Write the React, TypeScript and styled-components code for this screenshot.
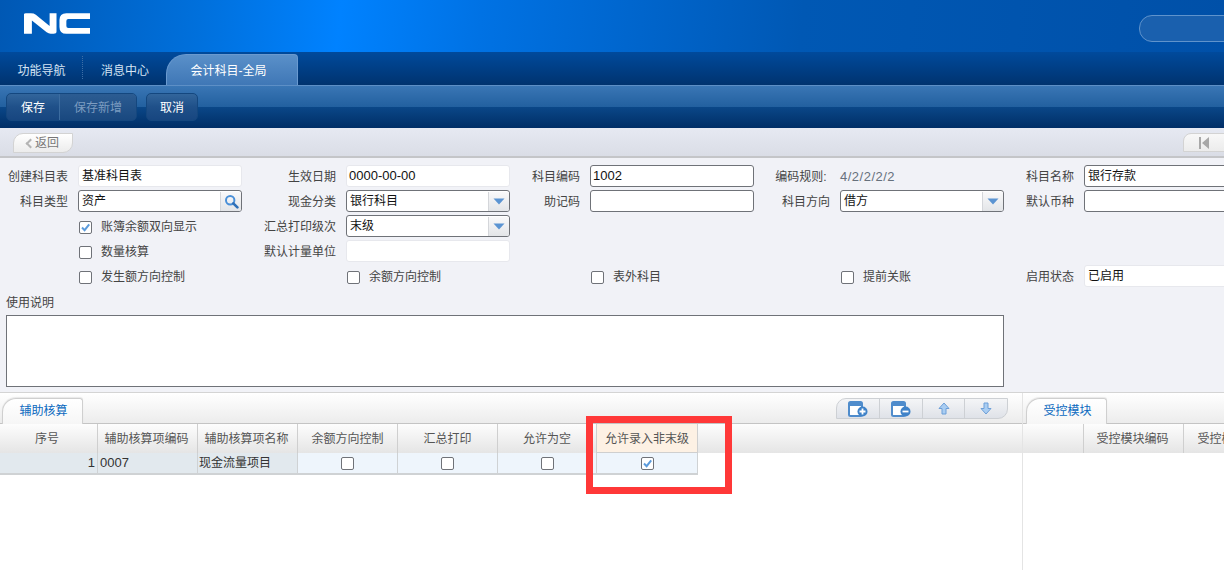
import React from "react";
import styled, { createGlobalStyle } from "styled-components";

const Global = createGlobalStyle`
  html, body { margin: 0; padding: 0; height: 100%; overflow: hidden; background: #fff; }
  body { font: 12px/1.2 "Liberation Sans", "Noto Sans CJK SC", sans-serif; color: #333; }
  #root { height: 100%; }
`;

const Page = styled.div`
  position: relative;
  width: 1224px;
  height: 570px;
  overflow: hidden;
`;

const Banner = styled.header`
  height: 52px;
  display: flex;
  align-items: flex-start;
  justify-content: space-between;
  background: linear-gradient(96deg, #0058b4 0, #0070dc 200px, #0082ff 340px, #0072e4 480px, #0058b4 800px, #0050a8 1224px);
`;

const Logo = styled.svg`
  margin: 13px 0 0 24px;
  width: 66px;
  height: 21px;
`;

const Search = styled.div`
  margin: 15px -42px 0 0;
  width: 125px;
  height: 25px;
  border: 1px solid #5f93cc;
  border-radius: 13px;
  background: #1a60ae;
`;

const TabBar = styled.nav`
  height: 34px;
  display: flex;
  align-items: flex-end;
  background: linear-gradient(#004a9c, #00336f);
  border-bottom: 1px solid #5d8fc6;
  box-sizing: border-box;
`;

const NavTab = styled.div<{ $sep?: boolean }>`
  height: 23px;
  margin-bottom: 6px;
  padding: 7px 0 0 1px;
  width: 83px;
  display: flex;
  align-items: center;
  justify-content: center;
  color: #d6e4f4;
  box-sizing: border-box;
  border-right: ${(p) => (p.$sep ? "1px dotted #3d6ea6" : "none")};
`;

const ActiveTab = styled.div`
  width: 132px;
  height: 31px;
  padding: 2px 7px 0 0;
  box-sizing: border-box;
  display: flex;
  align-items: center;
  justify-content: center;
  color: #fff;
  border: 1px solid #6a9ad0;
  border-bottom: none;
  border-radius: 20px 4px 0 0;
  background: linear-gradient(#5a90c9, #3f77b6);
`;

const Toolbar = styled.div`
  height: 42px;
  box-sizing: border-box;
  padding: 7px 6px;
  display: flex;
  gap: 9px;
  background: linear-gradient(#3a76b5 0, #22609f 50%, #0a4788 50%, #002e66 100%);
`;

const ButtonGroup = styled.div`
  display: flex;
  height: 28px;
  border: 1px solid #14477f;
  border-radius: 5px;
  overflow: hidden;
  box-sizing: border-box;
  background: linear-gradient(#32659b, #1f5089 50%, #174680);
`;

const ToolButton = styled.div<{ $w: number; $off?: boolean; $div?: boolean }>`
  width: ${(p) => p.$w}px;
  padding-top: 2px;
  display: flex;
  align-items: center;
  justify-content: center;
  color: ${(p) => (p.$off ? "#7c9cc0" : "#fff")};
  border-right: ${(p) => (p.$div ? "1px solid #3c6ca0" : "none")};
  background: ${(p) => (p.$off ? "linear-gradient(#2c5c92, #19487f)" : "none")};
  box-sizing: border-box;
`;

const BackBar = styled.div`
  height: 30px;
  box-sizing: border-box;
  padding-top: 5px;
  display: flex;
  justify-content: space-between;
  padding-left: 13px;
  background: linear-gradient(#e6e9f2, #dadde6);
  border-bottom: 2px solid #c4c5c8;
`;

const BackButton = styled.div`
  width: 60px;
  height: 20px;
  box-sizing: border-box;
  display: flex;
  align-items: center;
  padding-left: 14px;
  color: #777;
  border: 1px solid #d3d3d3;
  border-radius: 10px 0 10px 0;
  background: linear-gradient(#fff, #ececec);
`;

const ChevronLeft = styled.span`
  width: 5px;
  height: 5px;
  margin-right: 1px;
  margin-left: -1px;
  border-left: 2px solid #b4b4b4;
  border-bottom: 2px solid #b4b4b4;
  transform: rotate(45deg);
`;

const PagerButton = styled.div`
  margin-right: -19px;
  width: 60px;
  height: 19px;
  box-sizing: border-box;
  padding-left: 15px;
  display: flex;
  align-items: center;
  border: 1px solid #d3d3d3;
  border-radius: 8px 0 0 0;
  background: linear-gradient(#f8f8f8, #ececec);
`;

const Form = styled.section`
  height: 235px;
  box-sizing: border-box;
  background: #f1f2f7;
  padding: 7px 0 0 6px;
  border-bottom: 1px solid #d4d4d4;
  overflow: hidden;
`;

const FieldGrid = styled.div`
  display: grid;
  grid-template-columns: 72px 164px 104px 164px 80px 164px 86px 164px 80px 164px;
  grid-auto-rows: 22px;
  row-gap: 3px;
  width: 1300px;
`;

const Label = styled.label<{ $col?: number }>`
  ${(p) => (p.$col ? `grid-column: ${p.$col};` : "")}
  display: flex;
  align-items: center;
  justify-content: flex-end;
  padding: 2px 10px 0 0;
  white-space: nowrap;
  color: #444;
`;

const Field = styled.div<{ $soft?: boolean; $num?: boolean }>`
  box-sizing: border-box;
  height: 22px;
  display: flex;
  align-items: center;
  justify-content: space-between;
  padding: ${(p) => (p.$num ? "0 0 0 2px" : "1px 0 0 3px")};
  font-size: ${(p) => (p.$num ? "13px" : "12px")};
  background: #fff;
  color: #111;
  border: 1px solid ${(p) => (p.$soft ? "#e7e8ed" : "#6f7278")};
  border-radius: 3px;
  overflow: hidden;
`;

const FieldAction = styled.span`
  width: 20px;
  height: 100%;
  margin-top: -1px;
  flex: none;
  display: flex;
  align-items: center;
  justify-content: center;
  border-left: 1px solid #d4d6da;
  background: linear-gradient(#f9f9fa, #e3e5e8);
`;

const RuleValue = styled.div`
  display: flex;
  align-items: center;
  padding-top: 1px;
  font-size: 13px;
  letter-spacing: 0.5px;
  color: #66707c;
`;

const CheckCell = styled.label<{ $col: number }>`
  grid-column: ${(p) => p.$col};
  display: flex;
  align-items: center;
  gap: 9px;
  padding: 2px 0 0 1px;
  color: #444;
  white-space: nowrap;
`;

const Box = styled.span`
  width: 13px;
  height: 13px;
  flex: none;
  box-sizing: border-box;
  display: inline-flex;
  align-items: center;
  justify-content: center;
  background: #fff;
  border: 1px solid #6f7278;
  border-radius: 2px;
`;

const NoteLabel = styled.div`
  margin-top: 9px;
  height: 19px;
  color: #444;
`;

const NoteArea = styled.div`
  width: 998px;
  height: 72px;
  box-sizing: border-box;
  background: #fff;
  border: 1px solid #6f7278;
`;

const Lower = styled.section`
  display: flex;
  height: 178px;
`;

const LeftPane = styled.div`
  width: 1022px;
  flex: none;
  border-right: 1px solid #e4e4e4;
`;

const RightPane = styled.div`
  flex: 1;
  min-width: 0;
`;

const TabStrip = styled.div<{ $indent: number }>`
  height: 31px;
  box-sizing: border-box;
  padding: 5px 14px 0 ${(p) => p.$indent}px;
  display: flex;
  justify-content: space-between;
  align-items: flex-start;
  background: linear-gradient(#fff, #ececec);
  border-bottom: 1px solid #c4c4c4;
`;

const PaneTab = styled.div`
  width: 81px;
  height: 26px;
  padding-left: 2px;
  box-sizing: border-box;
  display: flex;
  align-items: center;
  justify-content: center;
  color: #0a69bf;
  background: linear-gradient(#fff, #f6f6f6);
  border: 1px solid #cfcfcf;
  border-bottom: none;
  border-radius: 14px 3px 0 0;
  box-shadow: 0 -1px 1px rgba(0, 0, 0, 0.08);
`;

const IconGroup = styled.div`
  display: flex;
  height: 21px;
  width: 172px;
  box-sizing: border-box;
  border: 1px solid #cdd0d4;
  border-radius: 10px 0 10px 0;
  background: linear-gradient(#f4f5f7, #dfe2e8);
`;

const IconButton = styled.div<{ $w: number; $div?: boolean }>`
  width: ${(p) => p.$w}px;
  display: flex;
  align-items: center;
  justify-content: center;
  box-sizing: border-box;
  border-right: ${(p) => (p.$div ? "1px solid #cdd0d4" : "none")};
`;

const HeaderRow = styled.div`
  display: flex;
  height: 29px;
  background: linear-gradient(#fdfdfd, #e5e5e5);
  box-sizing: border-box;
`;

const HeadCell = styled.div<{ $w: number; $hot?: boolean; $shift?: number }>`
  width: ${(p) => p.$w}px;
  flex: none;
  box-sizing: border-box;
  padding: 2px ${(p) => p.$shift ?? 0}px 0 0;
  display: flex;
  align-items: center;
  justify-content: center;
  white-space: nowrap;
  color: #555;
  border-right: 1px solid #cfcfcf;
  border-bottom: ${(p) => (p.$hot ? "1px solid #cfcfcf" : "none")};
  background: ${(p) => (p.$hot ? "#fdf1e4" : "none")};
`;

const DataRow = styled.div`
  display: flex;
  height: 22px;
  width: 698px;
  box-sizing: border-box;
  border-bottom: 2px solid #cfd2d4;
`;

const DataCell = styled.div<{ $w: number; $fixed?: boolean; $end?: boolean; $center?: boolean; $num?: boolean }>`
  width: ${(p) => p.$w}px;
  flex: none;
  box-sizing: border-box;
  display: flex;
  align-items: center;
  padding: ${(p) => (p.$center ? "0" : p.$num ? "0 2px" : "0 2px 0 1px")};
  font-size: ${(p) => (p.$num ? "13px" : "12px")};
  justify-content: ${(p) => (p.$end ? "flex-end" : p.$center ? "center" : "flex-start")};
  color: #333;
  border-right: 1px solid #cfd2d4;
  background: ${(p) => (p.$fixed ? "#e2e9ee" : "#eef5fc")};
`;

const Highlight = styled.div`
  position: absolute;
  left: 586px;
  top: 416px;
  width: 146px;
  height: 78px;
  box-sizing: border-box;
  border: 7px solid #ff3838;
  pointer-events: none;
`;

const Check = () => (
  <svg width="11" height="11" viewBox="0 0 11 11">
    <path d="M2 5.5 L4.6 8.2 L9.2 2.4" fill="none" stroke="#5b9bdc" strokeWidth="2" />
  </svg>
);

const Checkbox = ({ on }: { on?: boolean }) => <Box>{on && <Check />}</Box>;

const Arrow = () => (
  <FieldAction>
    <svg width="12" height="7" viewBox="0 0 12 7">
      <path d="M0.5 0.5 H11.5 L6 6.5 Z" fill="#5b94d2" />
    </svg>
  </FieldAction>
);

const SearchAction = () => (
  <FieldAction>
    <svg width="15" height="15" viewBox="0 0 15 15">
      <circle cx="6.2" cy="6.2" r="4.2" fill="none" stroke="#4a90d8" strokeWidth="2" />
      <path d="M9.3 9.3 L13.4 13.4" stroke="#2f70b8" strokeWidth="2.6" strokeLinecap="round" />
    </svg>
  </FieldAction>
);

const CardIcon = ({ plus }: { plus?: boolean }) => (
  <svg width="20" height="16" viewBox="0 0 20 16">
    <rect x="1" y="1" width="13" height="14" rx="1.5" fill="#fff" stroke="#4f8ccc" strokeWidth="2" />
    <rect x="1" y="1" width="13" height="4" fill="#4f8ccc" />
    <circle cx="14.5" cy="10.5" r="5" fill="#3f82c8" />
    <path d={plus ? "M11.5 10.5 H17.5 M14.5 7.5 V13.5" : "M11.5 10.5 H17.5"} stroke="#fff" strokeWidth="1.8" />
  </svg>
);

const ArrowIcon = ({ down }: { down?: boolean }) => (
  <svg width="12" height="13" viewBox="0 0 12 13">
    <path
      d={down ? "M4 1 H8 V6.5 H11 L6 12 L1 6.5 H4 Z" : "M6 1 L11 6.5 H8 V12 H4 V6.5 H1 Z"}
      fill="#a9cdf2"
      stroke="#6d9fd8"
    />
  </svg>
);

const headers: [string, number, number][] = [
  ["序号", 98, 3],
  ["辅助核算项编码", 100, 2],
  ["辅助核算项名称", 100, 2],
  ["余额方向控制", 100, 0],
  ["汇总打印", 100, 0],
  ["允许为空", 99, 0],
  ["允许录入非末级", 101, 0],
];

export default function App() {
  return (
    <Page>
      <Global />
      <Banner>
        <Logo viewBox="0 0 67 21">
          <path
            d="M0 21 V1 Q0 0 2 0 H7 Q10 0 12 1.5 L26 13 V0 H33 V19 Q33 21 30 21 H27 Q25 21 23 19.5 L8 7.5 V21 Z"
            fill="#fff"
          />
          <path d="M67 0 V6 H45 Q43 6 43 8 V13 Q43 15 45 15 H67 V21 H43 Q36 21 36 14 V7 Q36 0 43 0 Z" fill="#fff" />
        </Logo>
        <Search />
      </Banner>
      <TabBar>
        <NavTab $sep>功能导航</NavTab>
        <NavTab>消息中心</NavTab>
        <ActiveTab>会计科目-全局</ActiveTab>
      </TabBar>
      <Toolbar>
        <ButtonGroup>
          <ToolButton $w={53} $div>保存</ToolButton>
          <ToolButton $w={76} $off>保存新增</ToolButton>
        </ButtonGroup>
        <ButtonGroup>
          <ToolButton $w={50}>取消</ToolButton>
        </ButtonGroup>
      </Toolbar>
      <BackBar>
        <BackButton>
          <ChevronLeft />
          返回
        </BackButton>
        <PagerButton>
          <svg width="10" height="12" viewBox="0 0 10 12">
            <path d="M0 0 H2 V12 H0 Z M10 0 V12 L3 6 Z" fill="#a8a8a8" />
          </svg>
        </PagerButton>
      </BackBar>
      <Form>
        <FieldGrid>
          <Label>创建科目表</Label>
          <Field $soft>基准科目表</Field>
          <Label>生效日期</Label>
          <Field $soft $num>0000-00-00</Field>
          <Label>科目编码</Label>
          <Field $num>1002</Field>
          <Label>编码规则:{"\u00a0"}</Label>
          <RuleValue>4/2/2/2/2</RuleValue>
          <Label>科目名称</Label>
          <Field>银行存款</Field>

          <Label>科目类型</Label>
          <Field>资产<SearchAction /></Field>
          <Label>现金分类</Label>
          <Field>银行科目<Arrow /></Field>
          <Label>助记码</Label>
          <Field />
          <Label>科目方向</Label>
          <Field>借方<Arrow /></Field>
          <Label>默认币种</Label>
          <Field />

          <CheckCell $col={2}><Checkbox on />账簿余额双向显示</CheckCell>
          <Label $col={3}>汇总打印级次</Label>
          <Field>末级<Arrow /></Field>

          <CheckCell $col={2}><Checkbox />数量核算</CheckCell>
          <Label $col={3}>默认计量单位</Label>
          <Field $soft />

          <CheckCell $col={2}><Checkbox />发生额方向控制</CheckCell>
          <CheckCell $col={4}><Checkbox />余额方向控制</CheckCell>
          <CheckCell $col={6}><Checkbox />表外科目</CheckCell>
          <CheckCell $col={8}><Checkbox />提前关账</CheckCell>
          <Label $col={9}>启用状态</Label>
          <Field $soft>已启用</Field>
        </FieldGrid>
        <NoteLabel>使用说明</NoteLabel>
        <NoteArea />
      </Form>
      <Lower>
        <LeftPane>
          <TabStrip $indent={2}>
            <PaneTab>辅助核算</PaneTab>
            <IconGroup>
              <IconButton $w={43} $div><CardIcon plus /></IconButton>
              <IconButton $w={43} $div><CardIcon /></IconButton>
              <IconButton $w={42} $div><ArrowIcon /></IconButton>
              <IconButton $w={42}><ArrowIcon down /></IconButton>
            </IconGroup>
          </TabStrip>
          <HeaderRow>
            {headers.map(([t, w, s], i) => (
              <HeadCell key={t} $w={w} $shift={s} $hot={i === 6}>{t}</HeadCell>
            ))}
          </HeaderRow>
          <DataRow>
            <DataCell $w={98} $fixed $end $num>1</DataCell>
            <DataCell $w={100} $fixed $num>0007</DataCell>
            <DataCell $w={100} $fixed>现金流量项目</DataCell>
            <DataCell $w={100} $center><Checkbox /></DataCell>
            <DataCell $w={100} $center><Checkbox /></DataCell>
            <DataCell $w={99} $center><Checkbox /></DataCell>
            <DataCell $w={101} $center><Checkbox on /></DataCell>
          </DataRow>
        </LeftPane>
        <RightPane>
          <TabStrip $indent={3}>
            <PaneTab>受控模块</PaneTab>
          </TabStrip>
          <HeaderRow>
            <HeadCell $w={61} />
            <HeadCell $w={100} $shift={2}>受控模块编码</HeadCell>
            <HeadCell $w={100}>受控模块名称</HeadCell>
          </HeaderRow>
        </RightPane>
      </Lower>
      <Highlight />
    </Page>
  );
}
